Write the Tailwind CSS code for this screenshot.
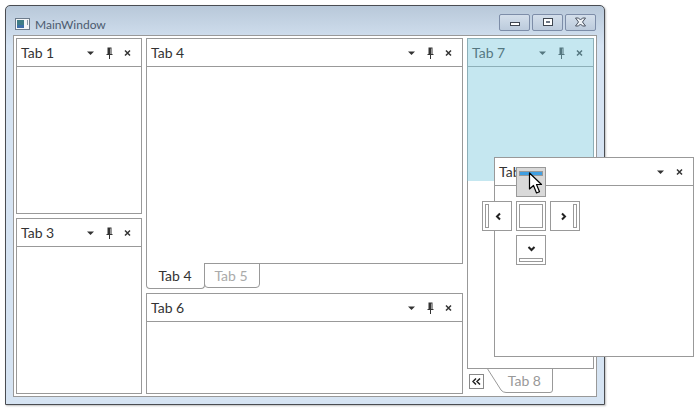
<!DOCTYPE html>
<html lang="en">
<head>
    <meta charset="UTF-8">
    <title>MainWindow</title>
    <script src="https://cdn.jsdelivr.net/npm/@tailwindcss/browser@4"></script>
</head>
<body class="bg-white font-['Lato',sans-serif] w-[699px] h-[409px] overflow-hidden relative">
    <!-- Window -->
    <div class="ml-[5px] mt-[5px] w-[600px] h-[400px] flex flex-col border border-[#4a4d52] rounded-t-[5px] bg-gradient-to-b from-[#b8c8d9] from-0% to-[#d6e4f3] to-[10%] px-[7px] pb-[7px] shadow-[1px_1px_2px_rgba(0,0,0,0.25)]">
        <!-- Title bar -->
        <div class="h-[29px] shrink-0 flex items-center relative">
            <svg class="ml-[2px] mt-[7px]" width="15" height="12" viewBox="0 0 15 12">
                <rect x="0.5" y="0.5" width="14" height="11" fill="#f4f6f8" stroke="#6d7c8c"/>
                <rect x="2" y="2" width="7" height="8" fill="#3f7d86"/>
                <rect x="2" y="7" width="7" height="3" fill="#3d6fa8"/>
                <rect x="12" y="2" width="1" height="5" fill="#8a99a8"/>
            </svg>
            <span class="ml-[5px] mt-[9px] text-[12px] leading-none text-[#4c5b6f]">MainWindow</span>
            <div class="ml-auto mr-[1px] mt-[3px] flex gap-[2px]">
                <div class="w-[31px] h-[17px] rounded-[2px] border border-[#7d8da8] bg-gradient-to-b from-[#d4dfeb] to-[#bccbdc] flex items-center justify-center">
                    <div class="w-[10px] h-[4px] mt-[4px] border border-[#3f4650] bg-white"></div>
                </div>
                <div class="w-[31px] h-[17px] rounded-[2px] border border-[#7d8da8] bg-gradient-to-b from-[#d4dfeb] to-[#bccbdc] flex items-center justify-center">
                    <div class="w-[10px] h-[8px] border border-[#3f4650] bg-white flex items-center justify-center"><div class="w-[4px] h-[2px] bg-[#6d7785]"></div></div>
                </div>
                <div class="w-[31px] h-[17px] rounded-[2px] border border-[#7d8da8] bg-gradient-to-b from-[#d4dfeb] to-[#bccbdc] flex items-center justify-center">
                    <svg width="13" height="10" viewBox="0 0 13 10"><path d="M1.5 1 H4.5 L6.5 3 L8.500 1 H11.500 L8.500 5 L11.500 9 H8.500 L6.500 7 L4.500 9 H1.500 L4.500 5 Z" fill="#eef2f6" stroke="#4a5260"/></svg>
                </div>
            </div>
        </div>

        <!-- Client area -->
        <div class="w-[584px] h-[362px] shrink-0 border border-[#999] bg-white p-[2px] flex gap-[4px]">
            <!-- Left column -->
            <div class="w-[126px] flex flex-col gap-[4px]">
                <div class="h-[176px] border border-[#999]">
                    <div class="h-[28px] border-b border-[#999] flex items-center pl-[4px] pr-[4px] text-[14px] text-[#333]">
                        <span class="flex-1">Tab 1</span>
                        <svg class="w-[19px]" height="10" viewBox="0 0 19 10"><path d="M7 3.500 H14 L10.500 7 Z" fill="#333"/></svg>
                        <svg class="w-[19px]" height="14" viewBox="0 0 19 14"><path d="M8.500 1.500 H12.500 V8 H13.500 V9 H11 V13 H10 V9 H7.500 V8 H8.500 Z M11 2.500 V8 H11.500 V2.500 Z" fill="#333" fill-rule="evenodd"/></svg>
                        <svg class="w-[19px]" height="10" viewBox="0 0 19 10"><path d="M7 2.500 L12 7.500 M12 2.500 L7 7.500" stroke="#333" stroke-width="1.500" fill="none"/></svg>
                    </div>
                </div>
                <div class="h-[176px] border border-[#999]">
                    <div class="h-[28px] border-b border-[#999] flex items-center pl-[4px] pr-[4px] text-[14px] text-[#333]">
                        <span class="flex-1">Tab 3</span>
                        <svg class="w-[19px]" height="10" viewBox="0 0 19 10"><path d="M7 3.500 H14 L10.500 7 Z" fill="#333"/></svg>
                        <svg class="w-[19px]" height="14" viewBox="0 0 19 14"><path d="M8.500 1.500 H12.500 V8 H13.500 V9 H11 V13 H10 V9 H7.500 V8 H8.500 Z M11 2.500 V8 H11.500 V2.500 Z" fill="#333" fill-rule="evenodd"/></svg>
                        <svg class="w-[19px]" height="10" viewBox="0 0 19 10"><path d="M7 2.500 L12 7.500 M12 2.500 L7 7.500" stroke="#333" stroke-width="1.500" fill="none"/></svg>
                    </div>
                </div>
            </div>

            <!-- Middle column -->
            <div class="w-[317px] flex flex-col">
                <div class="h-[226px] shrink-0 border border-[#999]">
                    <div class="h-[28px] border-b border-[#999] flex items-center pl-[4px] pr-[4px] text-[14px] text-[#333]">
                        <span class="flex-1">Tab 4</span>
                        <svg class="w-[19px]" height="10" viewBox="0 0 19 10"><path d="M7 3.500 H14 L10.500 7 Z" fill="#333"/></svg>
                        <svg class="w-[19px]" height="14" viewBox="0 0 19 14"><path d="M8.500 1.500 H12.500 V8 H13.500 V9 H11 V13 H10 V9 H7.500 V8 H8.500 Z M11 2.500 V8 H11.500 V2.500 Z" fill="#333" fill-rule="evenodd"/></svg>
                        <svg class="w-[19px]" height="10" viewBox="0 0 19 10"><path d="M7 2.500 L12 7.500 M12 2.500 L7 7.500" stroke="#333" stroke-width="1.500" fill="none"/></svg>
                    </div>
                </div>
                <div class="h-[29px] shrink-0 flex items-start">
                    <div class="relative -mt-[1px] w-[59px] h-[26px] bg-white border border-t-0 border-[#999] rounded-b-[4px] flex items-center justify-center pr-[1px] text-[14px] text-[#333]">Tab 4</div>
                    <div class="-mt-[1px] -ml-[1px] w-[56px] h-[25px] border border-[#999] rounded-b-[4px] flex items-center justify-center pr-[2px] text-[14px] text-[#aaa]">Tab 5</div>
                </div>
                <div class="h-[101px] shrink-0 border border-[#999]">
                    <div class="h-[28px] border-b border-[#999] flex items-center pl-[4px] pr-[4px] text-[14px] text-[#333]">
                        <span class="flex-1">Tab 6</span>
                        <svg class="w-[19px]" height="10" viewBox="0 0 19 10"><path d="M7 3.500 H14 L10.500 7 Z" fill="#333"/></svg>
                        <svg class="w-[19px]" height="14" viewBox="0 0 19 14"><path d="M8.500 1.500 H12.500 V8 H13.500 V9 H11 V13 H10 V9 H7.500 V8 H8.500 Z M11 2.500 V8 H11.500 V2.500 Z" fill="#333" fill-rule="evenodd"/></svg>
                        <svg class="w-[19px]" height="10" viewBox="0 0 19 10"><path d="M7 2.500 L12 7.500 M12 2.500 L7 7.500" stroke="#333" stroke-width="1.500" fill="none"/></svg>
                    </div>
                </div>
            </div>

            <!-- Right column -->
            <div class="w-[127px] flex flex-col">
                <div class="relative h-[331px] shrink-0 border border-[#999]">
                    <div class="h-[28px] border-b border-[#999] flex items-center pl-[4px] pr-[4px] text-[14px] text-[#333]">
                        <span class="flex-1">Tab 7</span>
                        <svg class="w-[19px]" height="10" viewBox="0 0 19 10"><path d="M7 3.500 H14 L10.500 7 Z" fill="#333"/></svg>
                        <svg class="w-[19px]" height="14" viewBox="0 0 19 14"><path d="M8.500 1.500 H12.500 V8 H13.500 V9 H11 V13 H10 V9 H7.500 V8 H8.500 Z M11 2.500 V8 H11.500 V2.500 Z" fill="#333" fill-rule="evenodd"/></svg>
                        <svg class="w-[19px]" height="10" viewBox="0 0 19 10"><path d="M7 2.500 L12 7.500 M12 2.500 L7 7.500" stroke="#333" stroke-width="1.500" fill="none"/></svg>
                    </div>
                    <!-- Drop preview over the upper half -->
                    <div class="absolute -left-[1px] -top-[1px] w-[127px] h-[143px] bg-[#7ecade]/45"></div>
                </div>
                <div class="flex-1 flex items-start">
                    <div class="ml-[2px] mt-[5px] w-[15px] h-[15px] border border-[#888] flex items-center justify-center">
                        <svg width="9" height="7" viewBox="0 0 9 7"><path d="M4 0.500 L1 3.500 L4 6.500 M8 0.500 L5 3.500 L8 6.500" stroke="#222" stroke-width="1.500" fill="none"/></svg>
                    </div>
                    <div class="relative ml-[2px] w-[68px] h-[25px] flex items-center justify-end pr-[13px] pb-[2px] text-[14px] text-[#999]">
                        <svg class="absolute left-0 top-0" width="68" height="25" viewBox="0 0 68 25"><path d="M1 -1 L15 21 Q17 23.500 20 23.500 H64 Q66.500 23.500 66.500 21 V0" fill="none" stroke="#999"/></svg>
                        <span class="relative">Tab 8</span>
                    </div>
                </div>
            </div>
        </div>
    </div>

    <!-- Floating pane -->
    <div class="absolute left-[494px] top-[157px] w-[200px] h-[200px] border border-[#999] bg-white">
        <div class="h-[28px] border-b border-[#999] flex items-center pl-[4px] pr-[4px] text-[14px] text-[#333]">
            <span class="flex-1">Tab 7</span>
            <svg class="w-[19px]" height="10" viewBox="0 0 19 10"><path d="M6 3.500 H13 L9.500 7 Z" fill="#333"/></svg>
            <svg class="w-[19px]" height="10" viewBox="0 0 19 10"><path d="M7 2.500 L12 7.500 M12 2.500 L7 7.500" stroke="#333" stroke-width="1.500" fill="none"/></svg>
        </div>
    </div>

    <!-- Dock indicators -->
    <div class="absolute left-[516px] top-[167px] w-[30px] h-[30px] border border-[#999] bg-[#d9d9d9] pt-[3px] px-[2px]">
        <div class="h-[5px] bg-[#3f9fe2] border border-[#999]"></div>
    </div>
    <div class="absolute left-[482px] top-[201px] w-[30px] h-[30px] border border-[#999] bg-white flex items-center pl-[2px]">
        <div class="w-[4px] h-[24px] border border-[#999]"></div>
        <svg class="ml-[6px]" width="7" height="9" viewBox="0 0 7 9"><path d="M5 1.500 L2 4.500 L5 7.500" stroke="#222" stroke-width="2" fill="none"/></svg>
    </div>
    <div class="absolute left-[516px] top-[201px] w-[30px] h-[30px] border border-[#999] bg-white p-[2px]">
        <div class="w-full h-full border border-[#999]"></div>
    </div>
    <div class="absolute left-[550px] top-[201px] w-[30px] h-[30px] border border-[#999] bg-white flex items-center justify-end pr-[2px]">
        <svg class="mr-[6px]" width="7" height="9" viewBox="0 0 7 9"><path d="M2 1.500 L5 4.500 L2 7.500" stroke="#222" stroke-width="2" fill="none"/></svg>
        <div class="w-[4px] h-[24px] border border-[#999]"></div>
    </div>
    <div class="absolute left-[516px] top-[235px] w-[30px] h-[30px] border border-[#999] bg-white flex flex-col items-center justify-end pb-[2px] px-[2px]">
        <svg class="mb-[6px]" width="9" height="7" viewBox="0 0 9 7"><path d="M1.500 2 L4.500 5 L7.500 2" stroke="#222" stroke-width="2" fill="none"/></svg>
        <div class="w-full h-[4px] border border-[#999]"></div>
    </div>

    <!-- Cursor -->
    <svg class="absolute left-[528px] top-[172px]" width="16" height="23" viewBox="0 0 16 23">
        <path d="M1.500 1 V17 L5.500 13.500 L8.500 21 L11.500 19.800 L8.500 12.500 L13.500 12.500 Z" fill="#fff" stroke="#000" stroke-width="1.200" stroke-linejoin="round"/>
    </svg>
</body>
</html>
